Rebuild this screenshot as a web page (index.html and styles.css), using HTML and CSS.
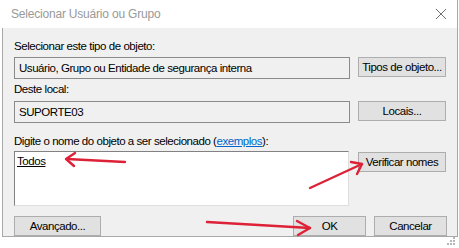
FILE: index.html
```html
<!DOCTYPE html>
<html lang="pt-BR">
<head>
    <meta charset="UTF-8">
    <meta name="viewport" content="width=device-width, initial-scale=1.0">
    <title>Selecionar Usuário ou Grupo</title>
    <link rel="stylesheet" href="styles.css">
</head>
<body>
    <div class="window">
        <div class="titlebar">
            <span class="title">Selecionar Usuário ou Grupo</span>
            <svg class="close" width="12" height="12" viewBox="0 0 12 12">
                <path d="M1 1 L11 11 M11 1 L1 11" stroke="#6f6f6f" stroke-width="1" fill="none"/>
            </svg>
        </div>
        <div class="content">
            <div class="label first">Selecionar este tipo de objeto:</div>
            <div class="row">
                <div class="field">Usuário, Grupo ou Entidade de segurança interna</div>
                <button class="btn side">Tipos de objeto...</button>
            </div>

            <div class="label second">Deste local:</div>
            <div class="row">
                <div class="field">SUPORTE03</div>
                <button class="btn side">Locais...</button>
            </div>

            <div class="label third">Digite o nome do objeto a ser selecionado (<a href="#">exemplos</a>):</div>
            <div class="row">
                <div class="names"><u>Todos</u></div>
                <button class="btn side check">Verificar nomes</button>
            </div>

            <div class="footer">
                <button class="btn advanced">Avançado...</button>
                <div class="actions">
                    <button class="btn ok">OK</button>
                    <button class="btn cancel">Cancelar</button>
                </div>
            </div>
        </div>
    </div>

    <!-- red annotation arrows + resize grip -->
    <svg class="overlay" width="459" height="248" viewBox="0 0 459 248">
        <g stroke="#dd2238" stroke-width="2.4" fill="none" stroke-linecap="round" stroke-linejoin="round">
            <path d="M125 162 L67 159"/>
            <path d="M75 153 L66 159 L74 166"/>
            <path d="M310 188 L362 164"/>
            <path d="M351 162 L362 164 L357 174"/>
            <path d="M207 222 L310 228"/>
            <path d="M297 221 L310 228 L298 235"/>
        </g>
        <g fill="#b8b8b8">
            <rect x="453" y="237" width="2" height="2"/>
            <rect x="450" y="240" width="2" height="2"/>
            <rect x="453" y="240" width="2" height="2"/>
            <rect x="447" y="243" width="2" height="2"/>
            <rect x="450" y="243" width="2" height="2"/>
            <rect x="453" y="243" width="2" height="2"/>
        </g>
    </svg>
</body>
</html>
```
FILE: styles.css
```css
body {
    margin: 0;
    background: #ffffff;
    font-family: "Liberation Sans", Arial, sans-serif;
    font-size: 11.5px;
    letter-spacing: -0.45px;
    color: #000;
}
.window {
    width: 455px;
    margin-left: 2px;
    border-right: 1px solid #a8a8a8;
}
.titlebar {
    height: 28px;
    display: flex;
    align-items: center;
    justify-content: space-between;
    padding: 0 10px 0 9px;
    background: #fff;
}
.title {
    color: #999;
    font-size: 12px;
    letter-spacing: -0.2px;
}
.close {
    margin-top: -1px;
}
.content {
    background: #f0f0f0;
    border-left: 1px solid #a8a8a8;
    border-bottom: 1px solid #a8a8a8;
    padding: 0 10px 8px 11px;
    height: 209px;
    box-sizing: border-box;
}
.label {
    height: 15px;
    line-height: 15px;
    white-space: nowrap;
}
.label.first {
    padding-top: 11px;
    margin-bottom: 3px;
}
.label.second {
    margin-top: 3px;
    margin-bottom: 4px;
}
.label.third {
    margin-top: 11px;
    margin-bottom: 2px;
}
.label a {
    color: #0066cc;
}
.row {
    display: flex;
    align-items: flex-start;
    gap: 8px;
}
.field {
    width: 336px;
    height: 22px;
    box-sizing: border-box;
    border: 1px solid #8a8a8a;
    background: #f0f0f0;
    padding: 0 4px;
    line-height: 20px;
    white-space: nowrap;
}
.names {
    width: 335px;
    height: 55px;
    box-sizing: border-box;
    background: #fff;
    border: 1px solid;
    border-color: #828282 #dedede #dedede #828282;
    padding: 2px 2px;
    line-height: 15px;
}
.btn {
    font-family: inherit;
    font-size: 11.5px;
    letter-spacing: -0.45px;
    color: #000;
    background: #e1e1e1;
    border: 1px solid #adadad;
    height: 20px;
    padding: 0;
    margin: 0;
    box-sizing: border-box;
    white-space: nowrap;
}
.side {
    width: 88px;
}
.check {
    margin-top: 1px;
    margin-left: 1px;
}
.footer {
    display: flex;
    justify-content: space-between;
    margin-top: 10px;
}
.advanced {
    width: 87px;
}
.actions {
    display: flex;
    gap: 8px;
}
.ok {
    width: 73px;
}
.cancel {
    width: 73px;
}
.overlay {
    position: absolute;
    top: 0;
    left: 0;
    pointer-events: none;
}
```
